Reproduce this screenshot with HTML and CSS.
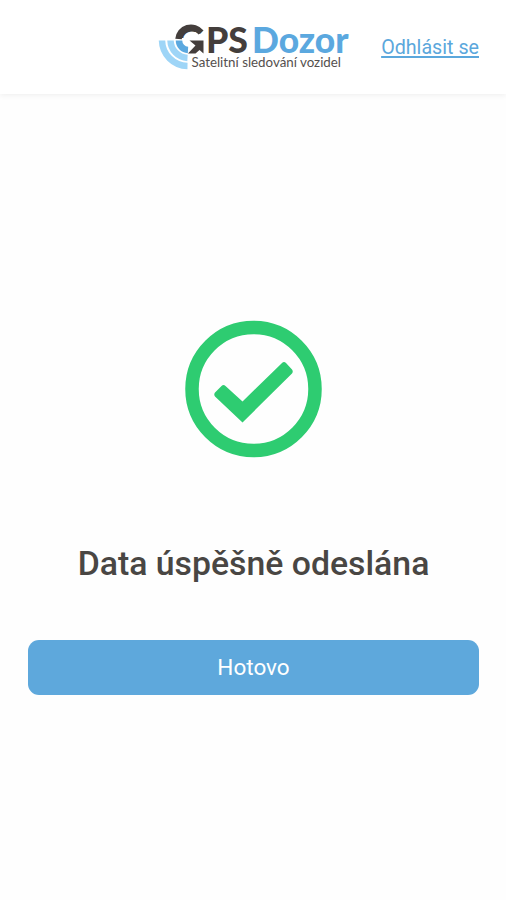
FILE: index.html
```html
<!DOCTYPE html>
<html lang="cs">
<head>
<meta charset="utf-8">
<meta name="viewport" content="width=device-width, initial-scale=1">
<title>GPS Dozor</title>
<link rel="stylesheet" href="styles.css">
</head>
<body>
<header class="header">
  <svg class="logo" width="194" height="60" viewBox="157 14 194 60" role="img" aria-label="GPS Dozor">
    <text class="logo-gps" x="175.500" y="52.500" textLength="29" lengthAdjust="spacingAndGlyphs">G</text>
    <text class="logo-gps" x="206" y="52.500" textLength="42" lengthAdjust="spacingAndGlyphs">PS</text>
    <path class="logo-gap" d="M172 38H205V56H172Z"/>
    <path class="logo-arc" d="M178.500 39A12.500 12 0 0 1 201 32.500"/>
    <path class="logo-arrow" d="M189.500 40.500H203.500V53.500L199.500 50L195.500 53.500H188L195.500 45.500Z"/>
    <path class="logo-wave logo-wave-inner" d="M179 40.500A9.500 9.500 0 0 0 188 50"/>
    <path class="logo-wave" d="M170.500 40.500A18 18 0 0 0 187.500 58"/>
    <path class="logo-wave" d="M162 40.500A26 26 0 0 0 187.500 66"/>
    <text class="logo-dozor" x="252" y="52.500" textLength="96.500" lengthAdjust="spacingAndGlyphs">Dozor</text>
    <text class="logo-tagline" x="191.500" y="67" textLength="149.500" lengthAdjust="spacingAndGlyphs">Satelitní sledování vozidel</text>
  </svg>
  <a class="logout" href="#">Odhlásit se</a>
</header>
<main class="content">
  <svg class="success" width="137" height="138" viewBox="0 0 137 138" aria-hidden="true">
    <circle class="success-ring" cx="68.500" cy="69" r="61.500"/>
    <path class="success-check" d="M30 72.500L36.500 66Q38.500 64 40.500 66L57.500 81.500L97 43Q99 41 101 43L107 49.500Q108.500 51.500 107 53.500L57.500 102.500L30 76.500Q28.500 74.500 30 72.500Z"/>
  </svg>
  <h1 class="title">Data úspěšně odeslána</h1>
  <button class="done" type="button">Hotovo</button>
</main>
</body>
</html>
```
FILE: styles.css
```css
* { box-sizing: border-box; }
body {
  margin: 0;
  min-height: 900px;
  background: #fefefe;
  color: #494643;
  font-family: Roboto, "Liberation Sans", sans-serif;
}
.header {
  display: flex;
  justify-content: space-between;
  height: 94px;
  padding: 14px 27px 0 157px;
  background: #fff;
  box-shadow: 0 1px 6px rgba(0, 0, 0, 0.07);
}
.logo { display: block; flex: none; overflow: visible; }
.logo-gps {
  font: 900 36px Lato, sans-serif;
  fill: #443e3c;
}
.logo-dozor {
  font: 900 36px Lato, sans-serif;
  fill: #5ba8df;
}
.logo-tagline {
  font: 400 12.5px Lato, sans-serif;
  fill: #55504e;
}
.logo-gap { fill: #fff; }
.logo-arc {
  fill: none;
  stroke: #443e3c;
  stroke-width: 6.5;
}
.logo-arrow { fill: #443e3c; }
.logo-wave {
  fill: none;
  stroke: #9ed5f7;
  stroke-width: 6.5;
}
.logo-wave-inner { stroke: #5ba8df; }
.logout {
  margin-top: 22px;
  color: #5ba7dc;
  font-size: 19.7px;
  line-height: 24px;
  white-space: nowrap;
  text-decoration-thickness: 1.5px;
  text-underline-offset: 2px;
}
.content {
  display: flex;
  flex-direction: column;
  align-items: center;
  padding: 226px 27px 0 28px;
}
.success { display: block; }
.success-ring {
  fill: none;
  stroke: #2ecc71;
  stroke-width: 13.5;
}
.success-check { fill: #2ecc71; }
.title {
  margin: 84px 0 0;
  font-size: 33.8px;
  font-weight: 500;
  line-height: 44px;
  white-space: nowrap;
}
.done {
  width: 100%;
  height: 55px;
  margin-top: 54px;
  padding: 0 0 2px;
  border: 0;
  border-radius: 11px;
  background: #5ea8dc;
  color: #fff;
  font: 400 22.5px Roboto, sans-serif;
}
```
